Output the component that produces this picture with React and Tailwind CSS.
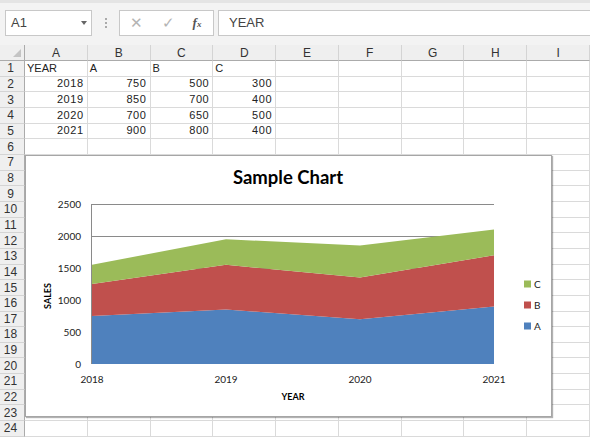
import React from "react";

const cols = ["A", "B", "C", "D", "E", "F", "G", "H", "I"];

const data = [
  ["YEAR", "A", "B", "C"],
  [2018, 750, 500, 300],
  [2019, 850, 700, 400],
  [2020, 700, 650, 500],
  [2021, 900, 800, 400],
];

const series = {
  A: [750, 850, 700, 900],
  B: [500, 700, 650, 800],
  C: [300, 400, 500, 400],
};

// plot geometry inside the chart box
const px = [66, 200, 334, 468];
const y0 = 208;
const yv = (v) => y0 - v * 0.064;

function areaPath(lower, upper) {
  const top = upper.map((v, i) => `${px[i]},${yv(v)}`).join(" L");
  const bottom = lower
    .map((v, i) => `${px[i]},${yv(v)}`)
    .reverse()
    .join(" L");
  return `M${top} L${bottom} Z`;
}

function Chart() {
  const a = series.A;
  const ab = a.map((v, i) => v + series.B[i]);
  const abc = ab.map((v, i) => v + series.C[i]);
  const zero = [0, 0, 0, 0];

  return (
    <div className="absolute left-[25px] top-[155px] w-[527px] h-[262px] bg-white border border-[#a6a6a6] shadow-[1px_1px_1px_rgba(0,0,0,0.3)]">
      <svg width="527" height="262" className="block" style={{ fontFamily: "Lato, 'Open Sans', sans-serif" }}>
        <text x="262" y="28" textAnchor="middle" fontSize="18.5" fontWeight="700" fill="#000">
          Sample Chart
        </text>

        {/* gridlines + axis */}
        {[48.5, 80.5, 112.5, 144.5, 176.5].map((gy) => (
          <line key={gy} x1="66" y1={gy} x2="468" y2={gy} stroke="#8a8a8a" strokeWidth="1" />
        ))}

        <path d={areaPath(zero, a)} fill="#4f81bd" />
        <path d={areaPath(a, ab)} fill="#c0504d" />
        <path d={areaPath(ab, abc)} fill="#9bbb59" />

        <line x1="65.5" y1="48" x2="65.5" y2="208" stroke="#8a8a8a" strokeWidth="1" />

        {[0, 500, 1000, 1500, 2000, 2500].map((v) => (
          <text key={v} x="55" y={yv(v) + 3.5} textAnchor="end" fontSize="10" fill="#222">
            {v}
          </text>
        ))}
        {[2018, 2019, 2020, 2021].map((yr, i) => (
          <text key={yr} x={px[i]} y="227" textAnchor="middle" fontSize="10" fill="#222">
            {yr}
          </text>
        ))}

        <text x="25" y="140" textAnchor="middle" fontSize="9" fontWeight="700" fill="#000" transform="rotate(-90 25 140)">
          SALES
        </text>
        <text x="267" y="244" textAnchor="middle" fontSize="9" fontWeight="700" fill="#000">
          YEAR
        </text>

        {[
          ["C", "#9bbb59", 128],
          ["B", "#c0504d", 149],
          ["A", "#4f81bd", 170],
        ].map(([k, c, cy]) => (
          <g key={k}>
            <rect x="498" y={cy - 3.5} width="7" height="7" fill={c} />
            <text x="508" y={cy + 3.5} fontSize="10" fill="#222">
              {k}
            </text>
          </g>
        ))}
      </svg>
    </div>
  );
}

function Toolbar() {
  return (
    <div className="h-[45px] bg-[#f3f3f3] border-t-[3px] border-[#e4e4e4] flex items-start pt-[7px] pl-[5px]">
      <div className="w-[87px] h-[26px] bg-white border border-[#c8c8c8] flex items-center justify-between pl-[5px] pr-[4px]">
        <span className="text-[13px] text-[#444]">A1</span>
        <span className="w-0 h-0 border-l-[3px] border-r-[3px] border-t-[4px] border-l-transparent border-r-transparent border-t-[#666]" />
      </div>
      <div className="w-[27px] h-[26px] flex flex-col items-center justify-center gap-[2px]">
        <span className="w-[2px] h-[2px] bg-[#aaa]" />
        <span className="w-[2px] h-[2px] bg-[#aaa]" />
        <span className="w-[2px] h-[2px] bg-[#aaa]" />
      </div>
      <div className="w-[95px] h-[26px] bg-white border border-[#c8c8c8] flex items-center">
        <span className="w-[32px] text-center text-[15px] text-[#b4b4b4]">✕</span>
        <span className="w-[32px] text-center text-[15px] text-[#b4b4b4]">✓</span>
        <span className="w-[26px] text-center text-[13px] italic font-bold text-[#555] font-['Liberation_Serif',serif]">
          f<span className="text-[9px]">x</span>
        </span>
      </div>
      <div className="ml-[4px] flex-1 h-[26px] bg-white border border-[#c8c8c8] border-r-0 flex items-center pl-[10px]">
        <span className="text-[13px] text-[#444]">YEAR</span>
      </div>
    </div>
  );
}

export default function App() {
  const rows = Array.from({ length: 24 }, (_, i) => i + 1);

  return (
    <div className="relative w-[590px] h-[437px] overflow-hidden bg-white font-['Liberation_Sans',Arial,sans-serif]">
      <Toolbar />

      <div className="grid grid-cols-[25px_repeat(9,minmax(0,1fr))]">
        <div className="h-[16px] bg-[#efefef] border-r border-b border-[#ababab] flex items-end justify-end pr-[3px] pb-[3px]">
          <span className="w-0 h-0 border-l-[8px] border-b-[8px] border-l-transparent border-b-[#c4c4c4]" />
        </div>
        {cols.map((c) => (
          <div key={c} className="h-[16px] bg-[#efefef] border-r border-b border-r-[#d4d4d4] border-b-[#ababab] flex items-center justify-center text-[12px] text-[#333]">
            {c}
          </div>
        ))}

        {rows.map((r) => (
          <React.Fragment key={r}>
            <div className="h-[15.67px] bg-[#efefef] border-r border-b border-r-[#ababab] border-b-[#d4d4d4] flex items-center justify-center pr-[3px] text-[12px] text-[#333] leading-none">
              {r}
            </div>
            {cols.map((c, ci) => {
              const v = data[r - 1] ? data[r - 1][ci] : undefined;
              const num = typeof v === "number";
              return (
                <div
                  key={c}
                  className={`h-[15.67px] border-r border-b border-[#dadada] flex items-center text-[11px] text-[#222] leading-none ${num ? "justify-end pr-[3px] tracking-[0.6px]" : "pl-[2px]"}`}
                >
                  {v}
                </div>
              );
            })}
          </React.Fragment>
        ))}
      </div>

      <Chart />
    </div>
  );
}
